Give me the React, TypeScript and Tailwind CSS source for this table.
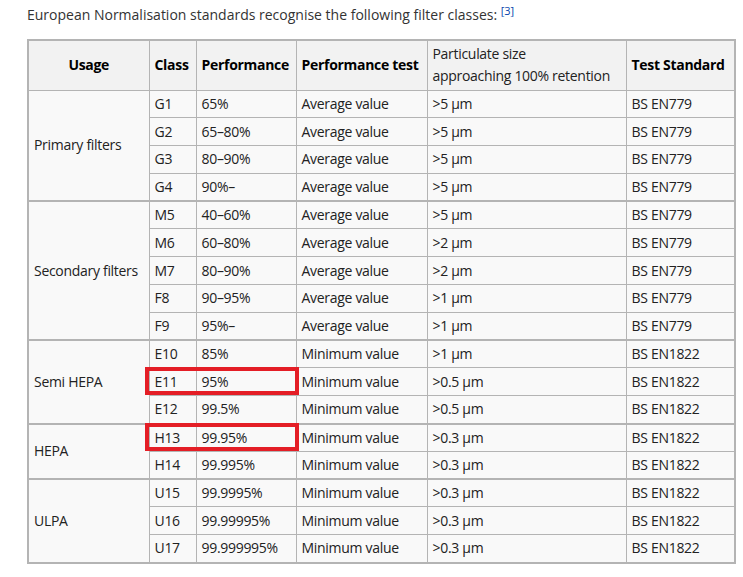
const rows = [
  { group: 'Primary filters', span: 4, cls: 'G1', perf: '65%', test: 'Average value', size: '>5 µm', std: 'BS EN779' },
  { cls: 'G2', perf: '65–80%', test: 'Average value', size: '>5 µm', std: 'BS EN779' },
  { cls: 'G3', perf: '80–90%', test: 'Average value', size: '>5 µm', std: 'BS EN779' },
  { cls: 'G4', perf: '90%–', test: 'Average value', size: '>5 µm', std: 'BS EN779', end: true },
  { group: 'Secondary filters', span: 5, cls: 'M5', perf: '40–60%', test: 'Average value', size: '>5 µm', std: 'BS EN779' },
  { cls: 'M6', perf: '60–80%', test: 'Average value', size: '>2 µm', std: 'BS EN779' },
  { cls: 'M7', perf: '80–90%', test: 'Average value', size: '>2 µm', std: 'BS EN779' },
  { cls: 'F8', perf: '90–95%', test: 'Average value', size: '>1 µm', std: 'BS EN779' },
  { cls: 'F9', perf: '95%–', test: 'Average value', size: '>1 µm', std: 'BS EN779', end: true },
  { group: 'Semi HEPA', span: 3, cls: 'E10', perf: '85%', test: 'Minimum value', size: '>1 µm', std: 'BS EN1822' },
  { cls: 'E11', perf: '95%', test: 'Minimum value', size: '>0.5 µm', std: 'BS EN1822' },
  { cls: 'E12', perf: '99.5%', test: 'Minimum value', size: '>0.5 µm', std: 'BS EN1822', end: true },
  { group: 'HEPA', span: 2, cls: 'H13', perf: '99.95%', test: 'Minimum value', size: '>0.3 µm', std: 'BS EN1822' },
  { cls: 'H14', perf: '99.995%', test: 'Minimum value', size: '>0.3 µm', std: 'BS EN1822', end: true },
  { group: 'ULPA', span: 3, cls: 'U15', perf: '99.9995%', test: 'Minimum value', size: '>0.3 µm', std: 'BS EN1822' },
  { cls: 'U16', perf: '99.99995%', test: 'Minimum value', size: '>0.3 µm', std: 'BS EN1822' },
  { cls: 'U17', perf: '99.999995%', test: 'Minimum value', size: '>0.3 µm', std: 'BS EN1822' },
]

const cell = 'border border-[#b4b4b4] px-[5px] py-0 align-middle whitespace-nowrap overflow-hidden'

export default function App() {
  return (
    <div className="relative w-[743px] h-[577px] bg-white text-[#222] font-['Open_Sans',sans-serif] text-[14px] pt-[4px] pl-[27px]">
      {/* 상단 설명 문장 */}
      <p className="leading-[22px] text-[#333]">
        European Normalisation standards recognise the following filter classes:{' '}
        <sup className="text-[#0645ad] text-[11px]">[3]</sup>
      </p>

      <table className="mt-[13px] w-[707px] table-fixed border-collapse bg-[#f9f9f9] border-2 border-[#b4b4b4] leading-[20px] tracking-[-0.3px]">
        <colgroup>
          <col className="w-[121px]" />
          <col className="w-[47px]" />
          <col className="w-[100px]" />
          <col className="w-[131px]" />
          <col className="w-[199px]" />
          <col className="w-[109px]" />
        </colgroup>
        <thead>
          <tr className="h-[50px] bg-[#f2f2f2] text-black">
            <th className={`${cell} text-center font-bold`}>Usage</th>
            <th className={`${cell} text-left font-bold`}>Class</th>
            <th className={`${cell} text-left font-bold`}>Performance</th>
            <th className={`${cell} text-left font-bold`}>Performance test</th>
            <th className={`${cell} text-left font-normal leading-[22px] text-[#222]`}>
              Particulate size
              <br />
              approaching 100% retention
            </th>
            <th className={`${cell} text-left font-bold`}>Test Standard</th>
          </tr>
        </thead>
        <tbody>
          {rows.map((r) => (
            <tr key={r.cls} className={`h-[27.8px] ${r.end ? 'border-b-2 border-[#b4b4b4]' : ''}`}>
              {r.group && (
                <td rowSpan={r.span} className={`${cell} border-b-2`}>
                  {r.group}
                </td>
              )}
              <td className={cell}>{r.cls}</td>
              <td className={cell}>{r.perf}</td>
              <td className={cell}>{r.test}</td>
              <td className={cell}>{r.size}</td>
              <td className={cell}>{r.std}</td>
            </tr>
          ))}
        </tbody>
      </table>

      {/* 빨간 강조 박스 */}
      <div className="absolute left-[145px] top-[367px] w-[154px] h-[28px] border-4 border-[#e41e26]" />
      <div className="absolute left-[145px] top-[423px] w-[154px] h-[28px] border-4 border-[#e41e26]" />
    </div>
  )
}
